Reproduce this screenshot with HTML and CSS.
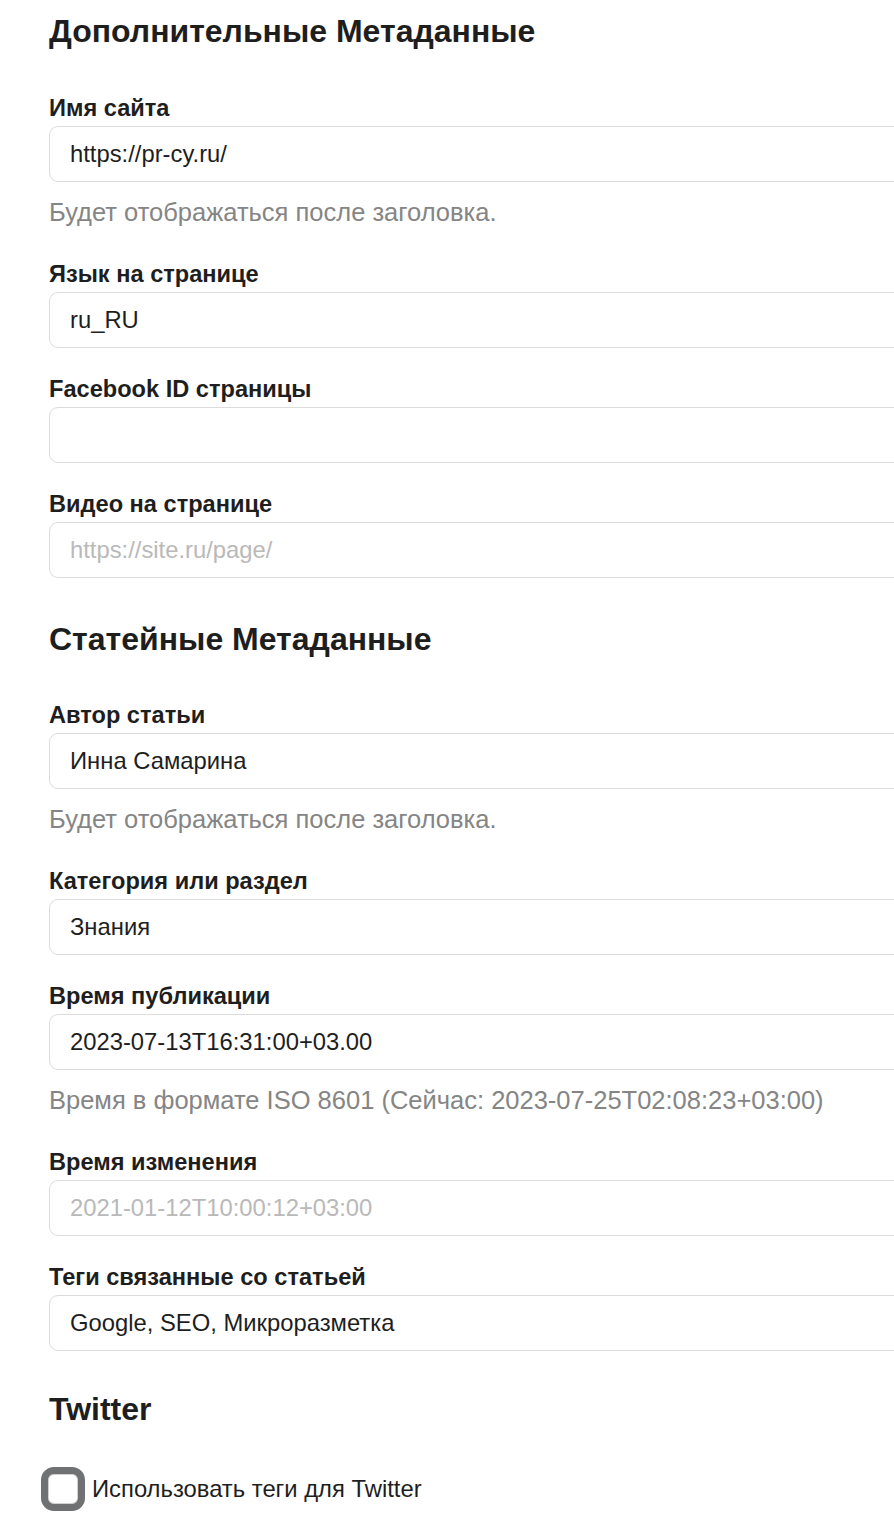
FILE: index.html
```html
<!DOCTYPE html>
<html lang="ru">
<head>
<meta charset="utf-8">
<link rel="stylesheet" href="styles.css">
</head>
<body>
<div class="page">
  <h2 class="section-title first">Дополнительные Метаданные</h2>

  <div class="field">
    <label class="label">Имя сайта</label>
    <input class="input" type="text" value="https://pr-cy.ru/">
    <p class="hint">Будет отображаться после заголовка.</p>
  </div>

  <div class="field">
    <label class="label">Язык на странице</label>
    <input class="input" type="text" value="ru_RU">
  </div>

  <div class="field">
    <label class="label">Facebook ID страницы</label>
    <input class="input" type="text" value="">
  </div>

  <div class="field">
    <label class="label">Видео на странице</label>
    <input class="input" type="text" placeholder="https://site.ru/page/">
  </div>

  <h2 class="section-title">Статейные Метаданные</h2>

  <div class="field">
    <label class="label">Автор статьи</label>
    <input class="input" type="text" value="Инна Самарина">
    <p class="hint">Будет отображаться после заголовка.</p>
  </div>

  <div class="field">
    <label class="label">Категория или раздел</label>
    <input class="input" type="text" value="Знания">
  </div>

  <div class="field">
    <label class="label">Время публикации</label>
    <input class="input" type="text" value="2023-07-13T16:31:00+03.00">
    <p class="hint">Время в формате ISO 8601 (Сейчас: 2023-07-25T02:08:23+03:00)</p>
  </div>

  <div class="field">
    <label class="label">Время изменения</label>
    <input class="input" type="text" placeholder="2021-01-12T10:00:12+03:00">
  </div>

  <div class="field">
    <label class="label">Теги связанные со статьей</label>
    <input class="input" type="text" value="Google, SEO, Микроразметка">
  </div>

  <h2 class="section-title twitter">Twitter</h2>

  <div class="check-row">
    <span class="checkbox"></span>
    <span class="check-label">Использовать теги для Twitter</span>
  </div>
</div>
</body>
</html>
```

FILE: styles.css
```css
html, body {
  margin: 0;
  padding: 0;
  background: #ffffff;
  overflow: hidden;
}

body {
  font-family: "Liberation Sans", Arial, sans-serif;
  color: #1e1e1e;
}

.page {
  width: 1000px;
  padding: 14px 0 0 49px;
}

.section-title {
  font-size: 32px;
  line-height: 34px;
  font-weight: 700;
  margin: 44px 0 47px;
  color: #1e1e1e;
}

.section-title.first {
  margin-top: 0;
  margin-bottom: 48px;
}

.section-title.twitter {
  margin-top: 41px;
}

.field {
  margin-bottom: 29px;
}

.label {
  display: block;
  font-size: 23.6px;
  line-height: 24px;
  font-weight: 700;
  margin-bottom: 6px;
  color: #1e1e1e;
}

.input {
  display: block;
  box-sizing: border-box;
  width: 100%;
  height: 56px;
  margin: 0;
  padding: 0 20px;
  border: 1px solid #dcdcdc;
  border-radius: 9px;
  background: #fff;
  font-family: "Liberation Sans", Arial, sans-serif;
  font-size: 23.8px;
  color: #1e1e1e;
  outline: none;
}

.input::placeholder {
  color: #b9b9b9;
  opacity: 1;
}

.hint {
  margin: 17px 0 37px;
  font-size: 25.5px;
  line-height: 26px;
  color: #858585;
}

.field:has(.hint) {
  margin-bottom: 0;
}

.check-row {
  display: flex;
  align-items: center;
  gap: 7px;
  margin: -6px 0 0 -8px;
}

.checkbox {
  box-sizing: border-box;
  width: 44px;
  height: 44px;
  border: 7px solid #6f7173;
  border-radius: 13px;
  background: #fff;
  box-shadow: inset 0 0 0 1px #d2d2d2;
}

.check-label {
  font-size: 23.8px;
  line-height: 24px;
  color: #1e1e1e;
}
```
